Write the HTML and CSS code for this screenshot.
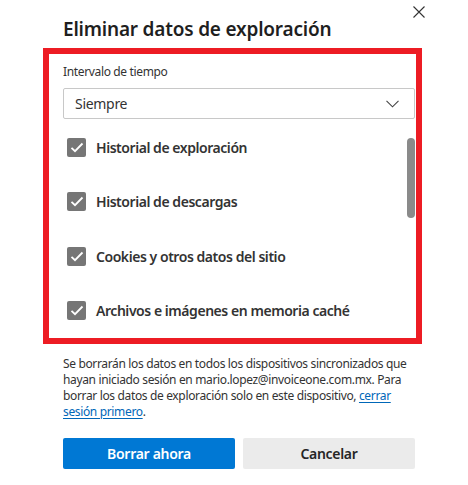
FILE: index.html
```html
<!DOCTYPE html>
<html lang="es">
<head>
<meta charset="utf-8">
<link rel="stylesheet" href="styles.css">
</head>
<body>
<div class="dialog">
  <header class="header">
    <h1 class="title">Eliminar datos de exploración</h1>
    <button class="close" aria-label="Cerrar">
      <svg width="12" height="12" viewBox="0 0 12 12"><path d="M0.5 0.5L11.5 11.5M11.5 0.5L0.5 11.5" stroke="#333" stroke-width="1.1" fill="none"/></svg>
    </button>
  </header>
  <section class="panel">
    <div class="label">Intervalo de tiempo</div>
    <div class="select">
      <span>Siempre</span>
      <svg width="13" height="8" viewBox="0 0 13 8"><path d="M0.5 0.8L6.5 6.8L12.5 0.8" stroke="#444" stroke-width="1.1" fill="none"/></svg>
    </div>
    <div class="list">
      <div class="items">
        <label class="item"><span class="box"><svg width="14" height="11" viewBox="0 0 14 11"><path d="M1.5 5.8L5 9.2L12.5 1.5" stroke="#fff" stroke-width="1.8" fill="none"/></svg></span>Historial de exploración</label>
        <label class="item"><span class="box"><svg width="14" height="11" viewBox="0 0 14 11"><path d="M1.5 5.8L5 9.2L12.5 1.5" stroke="#fff" stroke-width="1.8" fill="none"/></svg></span>Historial de descargas</label>
        <label class="item"><span class="box"><svg width="14" height="11" viewBox="0 0 14 11"><path d="M1.5 5.8L5 9.2L12.5 1.5" stroke="#fff" stroke-width="1.8" fill="none"/></svg></span>Cookies y otros datos del sitio</label>
        <label class="item"><span class="box"><svg width="14" height="11" viewBox="0 0 14 11"><path d="M1.5 5.8L5 9.2L12.5 1.5" stroke="#fff" stroke-width="1.8" fill="none"/></svg></span>Archivos e imágenes en memoria caché</label>
      </div>
      <div class="thumb"></div>
    </div>
  </section>
  <p class="note">Se borrarán los datos en todos los dispositivos sincronizados que hayan iniciado sesión en mario.lopez@invoiceone.com.mx. Para borrar los datos de exploración solo en este dispositivo, <a href="#">cerrar sesión primero</a>.</p>
  <div class="actions">
    <button class="btn primary">Borrar ahora</button>
    <button class="btn secondary">Cancelar</button>
  </div>
</div>
</body>
</html>
```
FILE: styles.css
```css
* { box-sizing: border-box; }
html, body { margin: 0; background: #fff; }
body {
  width: 468px;
  height: 485px;
  font-family: "Noto Sans", "Open Sans", sans-serif;
  color: #262626;
}
.dialog {
  padding: 0 53px 0 63px;
}
.header {
  display: flex;
  justify-content: space-between;
  align-items: flex-start;
  height: 48px;
}
.title {
  margin: 0;
  padding-top: 15px;
  font-size: 19px;
  line-height: 28px;
  letter-spacing: -0.2px;
  font-weight: 600;
  color: #1f1f1f;
}
.close {
  margin: 6px -10px 0 0;
  padding: 0;
  border: 0;
  background: none;
  width: 12px;
  height: 12px;
  display: flex;
}
.panel {
  margin: 0 -7px 0 -20px;
  border: 6px solid #ed1c24;
  height: 296px;
  padding: 10px 1px 0 14px;
}
.label {
  font-size: 12px;
  line-height: 16px;
  letter-spacing: -0.35px;
  color: #333;
}
.select {
  margin-top: 8px;
  height: 31px;
  border: 1px solid #c8c8c8;
  border-radius: 2px;
  display: flex;
  align-items: center;
  justify-content: space-between;
  padding: 0 15px 0 11px;
  font-size: 14px;
  letter-spacing: -0.3px;
  color: #333;
  width: 352px;
}
.list {
  display: flex;
  justify-content: space-between;
  margin-top: 19px;
}
.items {
  display: flex;
  flex-direction: column;
  gap: 35.3px;
  padding-left: 4px;
}
.item {
  display: flex;
  align-items: center;
  gap: 10px;
  height: 19px;
  font-size: 14px;
  letter-spacing: -0.45px;
  font-weight: 600;
  color: #333;
}
.box {
  width: 19px;
  height: 19px;
  border-radius: 2px;
  background: #767676;
  display: flex;
  align-items: center;
  justify-content: center;
}
.thumb {
  width: 8px;
  height: 80px;
  border-radius: 4px;
  background: #8a8a8a;
}
.note {
  margin: 12px 0 0;
  font-size: 12px;
  line-height: 16px;
  letter-spacing: -0.35px;
  color: #333;
}
.note a {
  color: #0067b8;
  text-decoration: underline;
  text-underline-offset: 2px;
}
.actions {
  display: flex;
  gap: 8px;
  margin-top: 18px;
}
.btn {
  flex: 1;
  height: 31px;
  border: 0;
  border-radius: 2px;
  font-family: inherit;
  font-size: 14px;
  letter-spacing: -0.3px;
  font-weight: 600;
}
.primary { background: #0078d4; color: #fff; }
.secondary { background: #ebebeb; color: #262626; }
```
